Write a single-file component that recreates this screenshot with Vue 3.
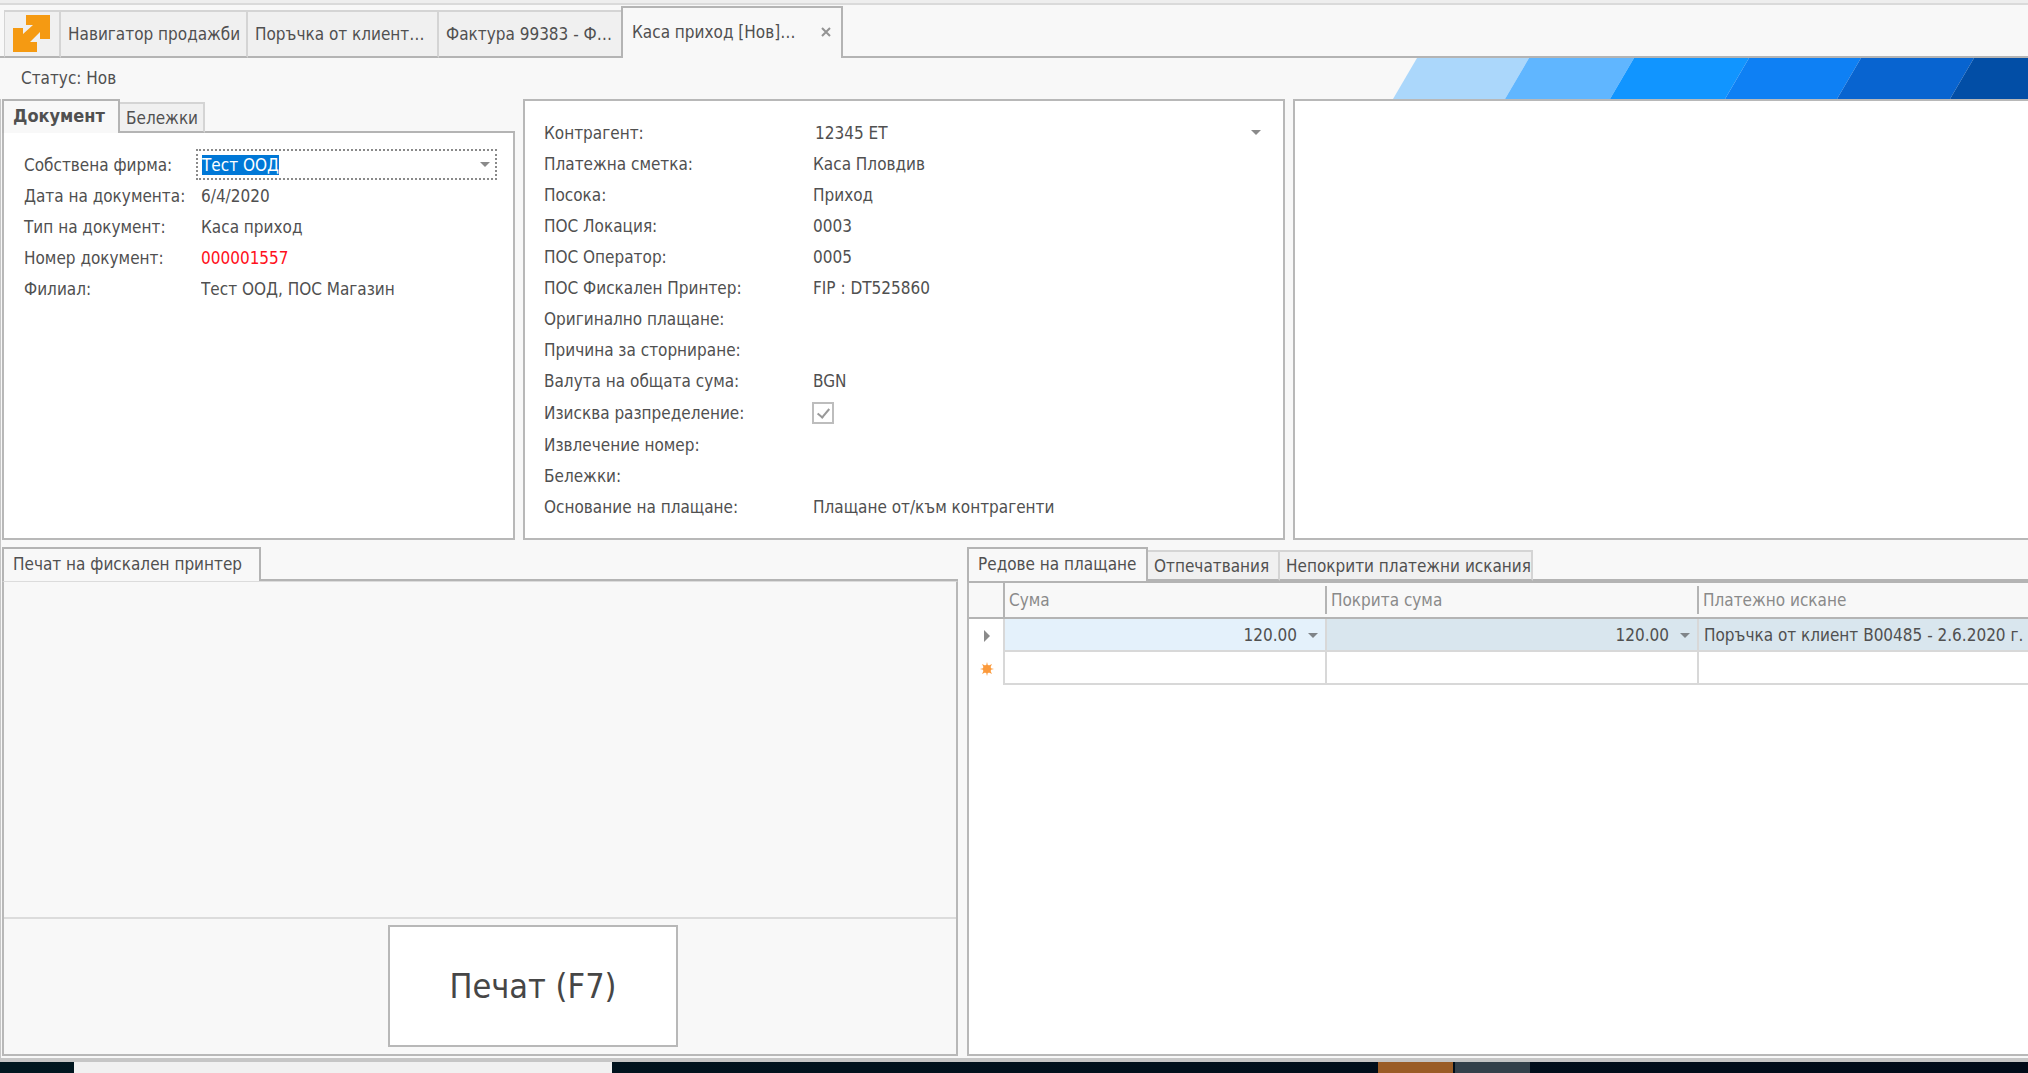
<script setup>
import { onMounted, ref } from 'vue'

const openTabs = ['Навигатор продажби', 'Поръчка от клиент…', 'Фактура 99383 - Ф…']

const company = ref('Тест ООД')
const companyInput = ref(null)

const documentFields = [
  { id: 'doc-date', label: 'Дата на документа:', value: '6/4/2020' },
  { id: 'doc-type', label: 'Тип на документ:', value: 'Каса приход' },
  { id: 'doc-number', label: 'Номер документ:', value: '000001557', alert: true },
  { id: 'doc-branch', label: 'Филиал:', value: 'Тест ООД, ПОС Магазин' },
]

const paymentFields = [
  { id: 'partner', label: 'Контрагент:', value: '12345 ET', kind: 'select' },
  { id: 'account', label: 'Платежна сметка:', value: 'Каса Пловдив' },
  { id: 'direction', label: 'Посока:', value: 'Приход' },
  { id: 'location', label: 'ПОС Локация:', value: '0003' },
  { id: 'operator', label: 'ПОС Оператор:', value: '0005' },
  { id: 'printer', label: 'ПОС Фискален Принтер:', value: 'FIP : DT525860' },
  { id: 'original', label: 'Оригинално плащане:', value: '' },
  { id: 'reversal', label: 'Причина за сторниране:', value: '' },
  { id: 'currency', label: 'Валута на общата сума:', value: 'BGN' },
  { id: 'allocate', label: 'Изисква разпределение:', kind: 'check' },
  { id: 'statement', label: 'Извлечение номер:', value: '' },
  { id: 'notes', label: 'Бележки:', value: '' },
  { id: 'reason', label: 'Основание на плащане:', value: 'Плащане от/към контрагенти' },
]

onMounted(() => {
  companyInput.value.focus()
  companyInput.value.select()
})
</script>

<template>
  <div class="app">
    <div class="ribbon-edge"></div>

    <nav class="window-tabs">
      <button class="win-tab logo" aria-label="Начало">
        <svg width="38" height="38" viewBox="0 0 38 38">
          <path fill="#f59a12" d="M13 0H37V24H27V17L17 27H24V37H0V13H10V19L20 10H13Z" />
        </svg>
      </button>
      <button v-for="tab in openTabs" :key="tab" class="win-tab">{{ tab }}</button>
      <div class="win-tab current">
        <button class="plain">Каса приход [Нов]…</button>
        <button class="plain close" aria-label="Затвори">
          <svg width="10" height="10" viewBox="0 0 10 10">
            <path d="M1 1L9 9M9 1L1 9" stroke="#939393" stroke-width="2" fill="none" />
          </svg>
        </button>
      </div>
      <div class="tab-rest"></div>
    </nav>

    <header class="status">
      <span>Статус: Нов</span>
      <svg class="banner" width="635" height="41" viewBox="0 0 635 41">
        <path fill="#abd7fb" d="M24 0H136L112 41H0Z" />
        <path fill="#60b6ff" d="M136 0H241L217 41H112Z" />
        <path fill="#1195ff" d="M241 0H356L332 41H217Z" />
        <path fill="#0e80f4" d="M356 0H468L444 41H332Z" />
        <path fill="#0864d0" d="M468 0H581L557 41H444Z" />
        <path fill="#024ea6" d="M581 0H635V41H557Z" />
      </svg>
    </header>

    <main class="body">
      <div class="upper">
        <section class="document">
          <div class="tabs">
            <button class="tab on bold">Документ</button>
            <button class="tab">Бележки</button>
            <div class="tab-fill"></div>
          </div>
          <div class="pane form narrow">
            <div class="field">
              <label for="company">Собствена фирма:</label>
              <div class="combo">
                <input id="company" ref="companyInput" v-model="company" />
                <button class="plain" aria-label="Избор">
                  <svg width="10" height="5" viewBox="0 0 10 5"><path fill="#8a8a8a" d="M0 0H10L5 5Z" /></svg>
                </button>
              </div>
            </div>
            <div v-for="f in documentFields" :key="f.id" class="field">
              <label :for="f.id">{{ f.label }}</label>
              <input :id="f.id" class="value" :class="{ alert: f.alert }" :value="f.value" readonly />
            </div>
          </div>
        </section>

        <section class="box form wide">
          <div v-for="f in paymentFields" :key="f.id" class="field">
            <label :for="f.id">{{ f.label }}</label>
            <div v-if="f.kind === 'select'" class="picker">
              <select :id="f.id"><option>{{ f.value }}</option></select>
              <svg width="10" height="5" viewBox="0 0 10 5"><path fill="#8a8a8a" d="M0 0H10L5 5Z" /></svg>
            </div>
            <input v-else-if="f.kind === 'check'" :id="f.id" class="check" type="checkbox" checked />
            <input v-else :id="f.id" class="value" :value="f.value" readonly />
          </div>
        </section>

        <section class="box open"></section>
      </div>

      <div class="lower">
        <section class="fiscal">
          <div class="tabs">
            <button class="tab on">Печат на фискален принтер</button>
            <div class="tab-fill"></div>
          </div>
          <div class="pane print">
            <div class="print-area"></div>
            <div class="print-bar"><button class="print-button">Печат (F7)</button></div>
          </div>
        </section>

        <section class="lines">
          <div class="tabs">
            <button class="tab on">Редове на плащане</button>
            <button class="tab">Отпечатвания</button>
            <button class="tab">Непокрити платежни искания</button>
            <div class="tab-fill"></div>
          </div>
          <div class="pane grid">
            <table>
              <colgroup>
                <col class="c-mark" /><col class="c-sum" /><col class="c-covered" /><col />
              </colgroup>
              <thead>
                <tr>
                  <th></th>
                  <th><span>Сума</span></th>
                  <th><span>Покрита сума</span></th>
                  <th><span>Платежно искане</span></th>
                </tr>
              </thead>
              <tbody>
                <tr class="selected">
                  <td class="mark">
                    <svg width="6" height="12" viewBox="0 0 6 12"><path fill="#8a8a8a" d="M0 0L6 6L0 12Z" /></svg>
                  </td>
                  <td class="num focus">
                    120.00<svg width="10" height="5" viewBox="0 0 10 5"><path fill="#7f8488" d="M0 0H10L5 5Z" /></svg>
                  </td>
                  <td class="num">
                    120.00<svg width="10" height="5" viewBox="0 0 10 5"><path fill="#7f8488" d="M0 0H10L5 5Z" /></svg>
                  </td>
                  <td>Поръчка от клиент B00485 - 2.6.2020 г.</td>
                </tr>
                <tr>
                  <td class="mark">
                    <svg width="14" height="14" viewBox="0 0 14 14">
                      <circle cx="7" cy="7" r="4" fill="#fb9a3c" />
                      <path fill="#fb9a3c" d="M7 0L8 4L12 2L10 6L14 7L10 8L12 12L8 10L7 14L6 10L2 12L4 8L0 7L4 6L2 2L6 4Z" />
                    </svg>
                  </td>
                  <td></td>
                  <td></td>
                  <td></td>
                </tr>
              </tbody>
            </table>
          </div>
        </section>
      </div>
    </main>

    <footer class="taskbar">
      <div class="task search"></div>
      <div class="task orange"></div>
      <div class="task slate"></div>
    </footer>
  </div>
</template>

<style>
body {
  margin: 0;
}
</style>

<style scoped>
.app {
  display: flex;
  flex-direction: column;
  height: 100vh;
  overflow: hidden;
  background: #f8f8f8;
  color: #505050;
  font-family: "DejaVu Sans Condensed", "DejaVu Sans", sans-serif;
  font-size: 17px;
  line-height: 20px;
}
.app *,
.app {
  box-sizing: border-box;
}
button,
input,
select {
  font: inherit;
  color: inherit;
  margin: 0;
  padding: 0;
  border: 0;
  border-radius: 0;
  background: none;
  outline: none;
  min-width: 0;
}
svg {
  display: block;
  flex: none;
}
.ribbon-edge {
  height: 5px;
  flex: none;
  background: #eee;
  border-bottom: 2px solid #dadada;
}

/* open windows */
.window-tabs {
  display: flex;
  align-items: flex-end;
  height: 53px;
  flex: none;
  padding-left: 4px;
  background: linear-gradient(#b4b4b4, #b4b4b4) left bottom / 4px 2px no-repeat;
}
.win-tab {
  height: 48px;
  flex: none;
  width: 191px;
  background: #f0f0f0;
  border: solid #d4d4d4;
  border-width: 2px 2px 0 0;
  border-bottom: 2px solid #b4b4b4;
  padding-left: 7px;
  text-align: left;
  white-space: nowrap;
}
.win-tab.logo {
  width: 57px;
  border-left: 1px solid #d4d4d4;
  padding-left: 8px;
}
.win-tab:nth-child(2) {
  width: 187px;
}
.win-tab:nth-child(4) {
  width: 182px;
  border-right: 0;
}
.win-tab.current {
  display: flex;
  align-items: center;
  justify-content: space-between;
  width: 222px;
  height: 52px;
  padding: 0 10px 2px 9px;
  background: #f8f8f8;
  border: 2px solid #b4b4b4;
  border-bottom: 0;
}
.tab-rest {
  flex: 1;
  border-bottom: 2px solid #b4b4b4;
}
.status {
  display: flex;
  justify-content: space-between;
  height: 41px;
  flex: none;
  line-height: 40px;
  padding-left: 21px;
}

/* panels */
.body {
  display: flex;
  flex-direction: column;
  flex: 1;
  min-height: 0;
  border-left: 1px solid #c6c6c6;
  padding-left: 1px;
  border-bottom: 4px solid #c6c6c6;
}
.upper {
  display: flex;
  gap: 8px;
  flex: none;
}
.document {
  display: flex;
  flex-direction: column;
  flex: 0 0 513px;
}
.box,
.pane {
  background: #fff;
  border: 2px solid #b8b8b8;
}
.pane {
  flex: 1;
  border-top: 0;
}
.box.wide {
  flex: 0 0 762px;
  padding: 16px 20px 15px 19px;
}
.box.open {
  flex: 1;
  border-right: 0;
}
.tabs {
  display: flex;
  align-items: flex-end;
  height: 34px;
  flex: none;
}
.tab {
  height: 31px;
  flex: none;
  padding: 0 0 0 6px;
  background: #f0f0f0;
  border: solid #d4d4d4;
  border-width: 2px 2px 0 0;
  border-bottom: 2px solid #b4b4b4;
  text-align: left;
  white-space: nowrap;
}
.tab.on {
  height: 34px;
  padding: 0 0 2px 9px;
  background: #f8f8f8;
  border: 2px solid #b4b4b4;
  border-bottom: 0;
}
.tab.bold {
  font-size: 18px;
  font-weight: bold;
}
.tab-fill {
  flex: 1;
  border-bottom: 2px solid #b4b4b4;
}
.document .tab.on {
  width: 118px;
}
.document .tab:nth-child(2) {
  width: 85px;
}
.fiscal .tab.on {
  width: 259px;
}
.lines .tab.on {
  width: 181px;
}
.lines .tab:nth-child(2) {
  width: 132px;
}
.lines .tab:nth-child(3) {
  width: 253px;
}

/* forms */
.field {
  display: grid;
  align-items: center;
  height: 31px;
}
.narrow {
  padding: 16px 16px 0 20px;
}
.narrow .field {
  grid-template-columns: 172px 1fr;
}
.wide {
  display: grid;
  min-height: 441px;
}
.wide .field {
  grid-template-columns: 268px 1fr;
  height: auto;
}
.value {
  width: 100%;
  padding-left: 5px;
}
.wide .value {
  padding-left: 1px;
}
.alert {
  color: #ff1020;
}
.combo {
  display: flex;
  align-items: center;
  height: 31px;
  padding: 0 5px 0 4px;
  border: 2px dotted #8a8a8a;
}
.combo input {
  flex: 1;
  caret-color: #e8862a;
}
.combo input::selection {
  background: #0078d7;
  color: #fff;
}
.picker {
  display: grid;
  align-items: center;
}
.picker > * {
  grid-area: 1 / 1;
}
.picker select {
  appearance: none;
  padding-left: 3px;
}
.picker svg {
  justify-self: end;
  margin-right: 2px;
  pointer-events: none;
}
.check {
  appearance: none;
  width: 22px;
  height: 22px;
  border: 2px solid #bdbdbd;
  display: grid;
  place-items: center;
}
.check::after {
  content: "";
  width: 5px;
  height: 10px;
  border: solid #999;
  border-width: 0 2px 2px 0;
  transform: translateY(-1px) rotate(40deg);
}

/* lower half */
.lower {
  display: flex;
  gap: 9px;
  flex: 1;
  min-height: 0;
  padding: 7px 0 2px;
}
.fiscal {
  display: flex;
  flex-direction: column;
  flex: 0 0 956px;
}
.lines {
  display: flex;
  flex-direction: column;
  flex: 1;
  min-width: 0;
}
.print {
  display: flex;
  flex-direction: column;
  background: #f8f8f8;
  border-top: 1px solid #dcdcdc;
}
.print-area {
  flex: 1;
  border-bottom: 2px solid #dcdcdc;
}
.print-bar {
  display: flex;
  justify-content: center;
  padding: 6px 124px 7px 230px;
}
.print-button {
  width: 290px;
  height: 122px;
  flex: none;
  background: #fff;
  border: 2px solid #b8b8b8;
  font-size: 34px;
  color: #464646;
}
.grid {
  border-top: 2px solid #b4b4b4;
  border-right: 0;
  overflow: hidden;
}
table {
  width: 100%;
  table-layout: fixed;
  border-collapse: separate;
  border-spacing: 0;
}
.c-mark {
  width: 36px;
}
.c-sum {
  width: 322px;
}
.c-covered {
  width: 372px;
}
th {
  height: 36px;
  padding: 0;
  background: #f8f8f8;
  border-bottom: 2px solid #b4b4b4;
  font-weight: normal;
  text-align: left;
  color: #8a8a8a;
}
th span {
  display: block;
  height: 28px;
  line-height: 28px;
  padding-left: 4px;
  border-right: 2px solid #b4b4b4;
}
th:first-child {
  border-right: 2px solid #b4b4b4;
}
th:last-child span {
  border: 0;
}
td {
  height: 33px;
  padding: 0 0 0 5px;
  border: solid #d8d8d8;
  border-width: 0 2px 2px 0;
  white-space: nowrap;
}
td:last-child {
  border-right: 0;
}
td.mark {
  padding: 0 0 0 15px;
  border-bottom: 0;
}
tr:last-child .mark {
  padding-left: 11px;
}
.selected td:not(.mark) {
  background: #d9e6ee;
}
.selected td.focus {
  background: #e4f1fb;
}
.num {
  text-align: right;
}
.num svg {
  display: inline-block;
  vertical-align: middle;
  margin: 0 7px 0 11px;
}

/* taskbar */
.taskbar {
  display: flex;
  height: 11px;
  flex: none;
  background: linear-gradient(90deg, #00161f, #000a18);
  padding-left: 74px;
}
.task.search {
  width: 538px;
  background: #f1f1f1;
  margin-right: 766px;
}
.task.orange {
  width: 75px;
  margin-right: 2px;
  background: #9a5c26;
}
.task.slate {
  width: 75px;
  background: #33404a;
}
</style>
